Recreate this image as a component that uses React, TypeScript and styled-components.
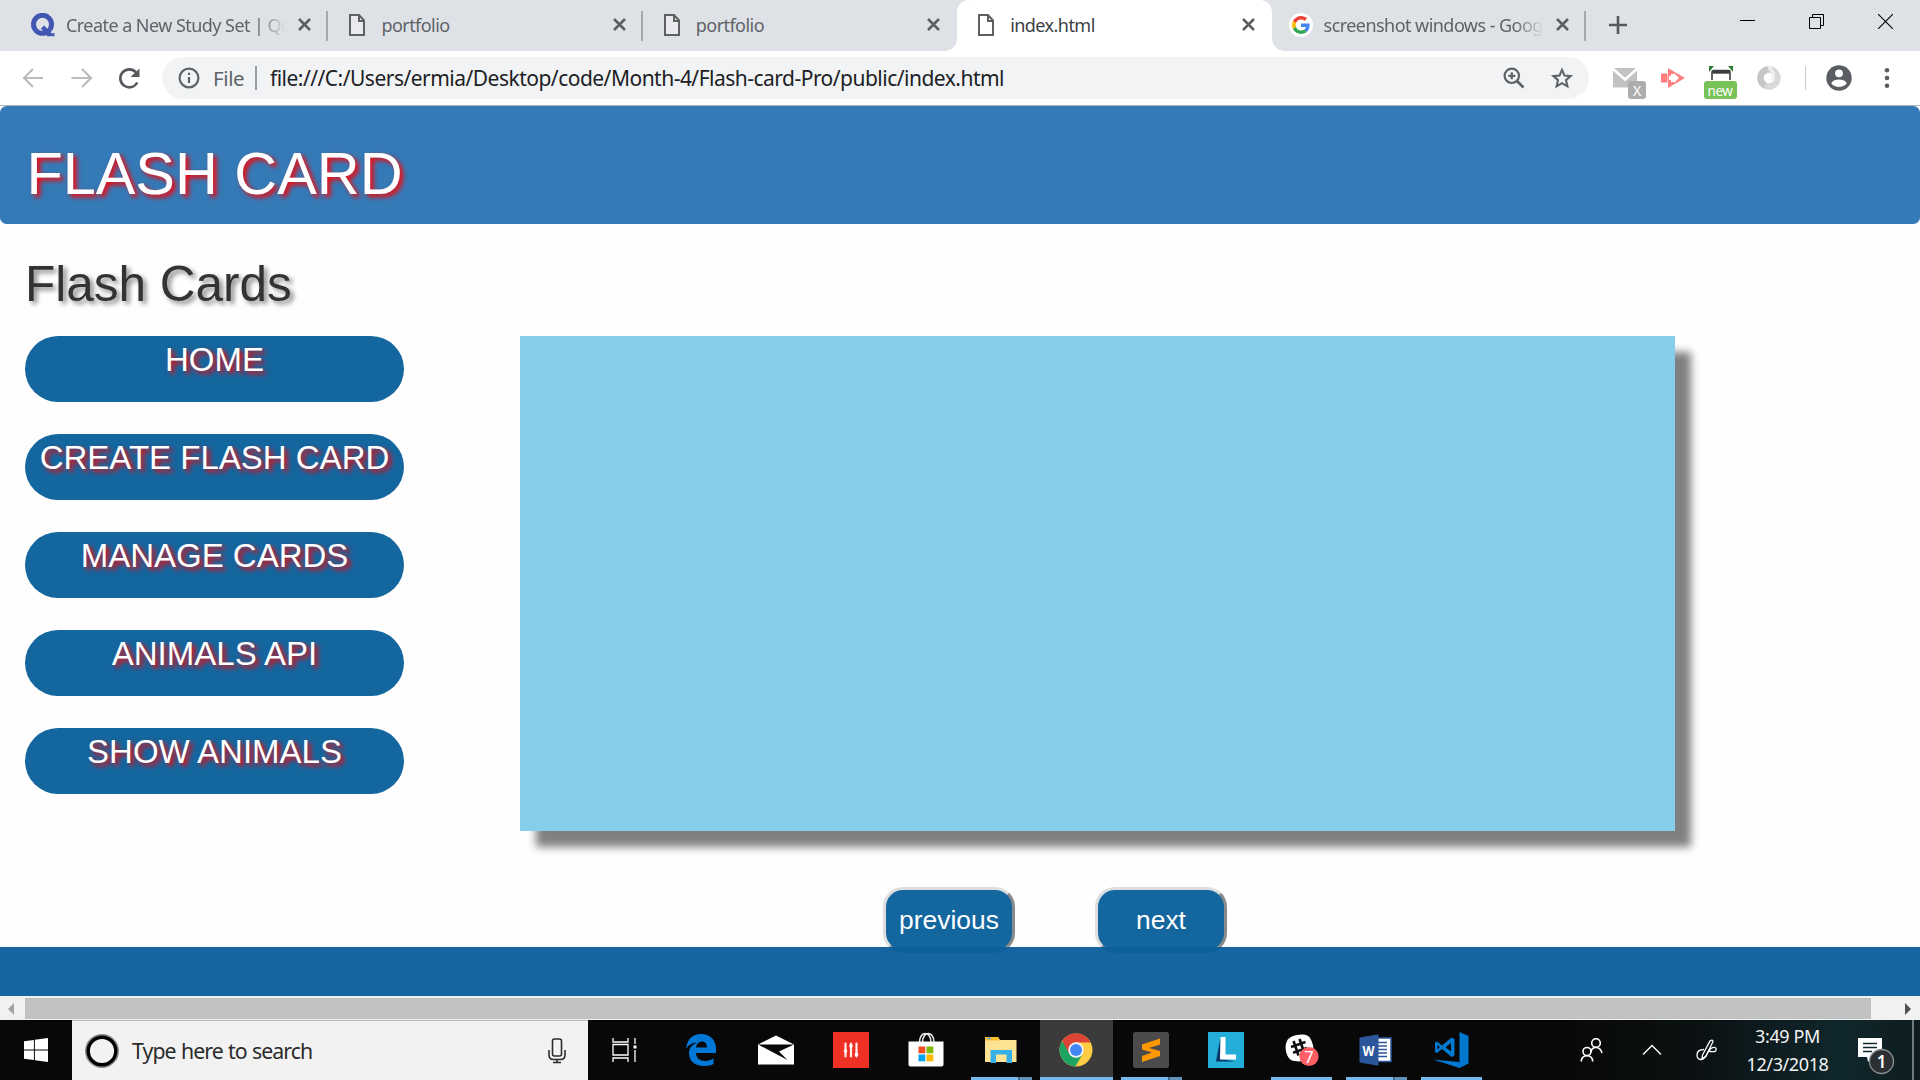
import React from "react";
import styled, { createGlobalStyle, css } from "styled-components";

const ui = `"Noto Sans", "Open Sans", sans-serif`;
const arial = `"Liberation Sans", Arial, sans-serif`;

const Global = createGlobalStyle`
  *, *::before, *::after { box-sizing: border-box; }
  body { margin: 0; background: #fff; overflow: hidden; }
  svg { display: block; flex: none; }
`;

const Screen = styled.div`
  width: 1920px;
  height: 1080px;
  display: flex;
  flex-direction: column;
  overflow: hidden;
  background: #fff;
`;

/* ---------- browser chrome ---------- */
const TabStrip = styled.div`
  display: flex;
  height: 51px;
  padding-left: 14px;
  background: #dee1e6;
`;

const Tab = styled.div<{ $active?: boolean; $divider?: boolean }>`
  display: flex;
  align-items: center;
  width: 314.4px;
  height: 51px;
  padding: 0 17px 2px;
  background: ${(p) => (p.$active ? "#fff" : "transparent")};
  border-radius: ${(p) => (p.$active ? "12px 12px 0 0" : "0")};
  color: ${(p) => (p.$active ? "#3c4043" : "#5f6368")};
  position: relative;
  ${(p) =>
    p.$divider &&
    css`
      &::after {
        content: "";
        position: absolute;
        right: 0;
        top: 11px;
        width: 2px;
        height: 30px;
        background: #a5a8ac;
      }
    `}
  ${(p) =>
    p.$active &&
    css`
      &::before,
      &::after {
        content: "";
        position: absolute;
        bottom: 0;
        width: 12px;
        height: 12px;
      }
      &::before {
        left: -12px;
        background: radial-gradient(circle at 0 0, transparent 11.5px, #fff 12px);
      }
      &::after {
        right: -12px;
        background: radial-gradient(circle at 100% 0, transparent 11.5px, #fff 12px);
      }
    `}
`;

const TabIcon = styled.span`
  display: flex;
  flex: none;
  width: 24px;
  height: 24px;
  justify-content: center;
  align-items: center;
  margin-right: 12px;
`;

const TabTitle = styled.span<{ $fade?: boolean }>`
  flex: 1;
  min-width: 0;
  font: 18px/24px ${ui};
  letter-spacing: -0.55px;
  white-space: nowrap;
  margin-right: 12px;
  ${(p) => p.$fade && css`
    margin-left: -1px;
    mask-image: linear-gradient(90deg, #000 calc(100% - 30px), transparent);
  `}
`;

const WindowControls = styled.div`
  display: flex;
  margin-left: auto;
  height: 43px;
  align-items: center;
`;

const ControlCell = styled.div`
  width: 69px;
  display: flex;
  justify-content: center;
`;

const NewTab = styled.div`
  width: 65px;
  display: flex;
  align-items: center;
  justify-content: center;
  padding-bottom: 2px;
`;

const Toolbar = styled.div`
  height: 55px;
  display: flex;
  align-items: center;
  border-bottom: 1px solid #b4b5b7;
  background: #fff;
`;

const NavButtons = styled.div`
  display: flex;
  width: 162px;
  padding-left: 21px;
  gap: 24px;
`;

const Omnibox = styled.div`
  display: flex;
  align-items: center;
  width: 1427px;
  height: 42px;
  border-radius: 21px;
  background: #f1f3f4;
  padding: 0 15px 0 16px;
`;

const Scheme = styled.span`
  font: 20.5px/28px ${ui};
  letter-spacing: -0.4px;
  color: #5f6368;
  width: 42px;
  margin-left: 13px;
`;

const SchemeRule = styled.span`
  width: 2px;
  height: 24px;
  background: #9a9da1;
  margin-right: 13px;
`;

const Url = styled.span`
  flex: 1;
  font: 21px/28px ${ui};
  letter-spacing: -0.515px;
  color: #202124;
  white-space: nowrap;
`;

const OmniActions = styled.div`
  display: flex;
  gap: 24px;
`;

const Extensions = styled.div`
  display: flex;
  align-items: center;
  flex: 1;
  height: 54px;
  padding-left: 24px;
`;

const ExtCell = styled.div<{ $w: number; $badged?: boolean }>`
  width: ${(p) => p.$w}px;
  padding-top: ${(p) => (p.$badged ? 10 : 0)}px;
  display: flex;
  align-items: center;
`;

const ExtRule = styled.span`
  width: 1px;
  height: 24px;
  background: #c8cacd;
  margin-right: 20px;
`;

/* ---------- page ---------- */
const Page = styled.main`
  height: 890px;
  display: flex;
  flex-direction: column;
  font-family: ${arial};
  background: #fefefe;
`;

const Jumbo = styled.header`
  height: 118px;
  padding: 34.65px 26.4px 0;
  border-radius: 6.6px;
  background: #337ab7;
`;

const Title = styled.h1`
  margin: 0;
  font: 400 59.4px/65.34px ${arial};
  color: #fff;
  text-shadow: 3.3px 3.3px 4.95px red;
`;

const Body = styled.div`
  display: grid;
  grid-template-columns: 379px 1155px;
  column-gap: 116px;
  grid-template-rows: 112px 495px;
  padding-left: 25px;
`;

const Heading = styled.h2`
  grid-column: 1 / -1;
  margin: 0;
  padding-top: 33px;
  font: 400 49.5px/54.45px ${arial};
  color: #333;
  text-shadow: 3.3px 3.3px 4.95px gray;
`;

const Menu = styled.nav`
  display: flex;
  flex-direction: column;
  gap: 32px;
`;

const MenuItem = styled.a`
  height: 66px;
  border-radius: 33px;
  background: #14669f;
  color: #fff;
  font-size: 33px;
  line-height: 47.1px;
  text-align: center;
  white-space: nowrap;
  text-shadow: 3.3px 3.3px 4.95px red;
`;

const Card = styled.section`
  background: #87ceeb;
  box-shadow: 16px 16px 8.25px gray;
`;

const Pager = styled.div`
  display: flex;
  gap: 80px;
  padding: 56px 0 0 883px;
`;

const PagerButton = styled.button`
  width: 132px;
  height: 66px;
  padding: 0;
  border: 3px solid;
  border-color: #dedede #8a8a8a #8a8a8a #dedede;
  border-radius: 20px;
  background: #14669f;
  color: #fff;
  font: 26.4px/37px ${arial};
`;

const Footer = styled.footer`
  height: 49px;
  margin-top: -6px;
  background: rgba(8, 94, 155, 0.95);
  position: relative;
`;

const ScrollBar = styled.div`
  height: 24px;
  display: flex;
  align-items: center;
  background: #f1f1f1;
  padding: 1px 8px 0 8px;
`;

const Thumb = styled.div`
  height: 21px;
  width: 1846px;
  margin: 0 34px 0 11px;
  background: #c1c1c1;
`;

const Arrow = styled.i<{ $right?: boolean }>`
  border: solid transparent;
  border-width: 6px 0;
  ${(p) => (p.$right ? "border-left: 6px solid #505050;" : "border-right: 6px solid #a3a3a3;")}
`;

/* ---------- taskbar ---------- */
const Taskbar = styled.div`
  height: 60px;
  display: flex;
  background: linear-gradient(90deg, #080808 0 1560px, #0b1112 1700px, #0f272c 1840px, #0f2226 1880px, #0d1b1f);
`;

const Start = styled.div`
  width: 72px;
  display: flex;
  align-items: center;
  justify-content: center;
`;

const Search = styled.div`
  width: 516px;
  display: flex;
  align-items: center;
  border-top: 1px solid #b9b9b9;
  background: #f2f2f2;
  padding: 0 21px 0 12px;
`;

const SearchText = styled.span`
  flex: 1;
  margin-left: 12px;
  font: 21.3px/30px ${ui};
  letter-spacing: -0.92px;
  word-spacing: 0.6px;
  color: #2b2b2b;
  padding-top: 1px;
`;

const TaskView = styled.div`
  width: 76px;
  display: flex;
  align-items: center;
  justify-content: center;
  padding-right: 3px;
`;

const TaskApp = styled.div<{ $active?: boolean; $open?: "one" | "many" }>`
  width: 75px;
  height: 60px;
  padding: 0 1px;
  display: grid;
  grid-template-rows: 57px 3px;
  justify-items: center;
  align-items: center;
  &::before {
    content: "";
    grid-area: 1 / 1 / 3 / 2;
    width: 73px;
    height: 60px;
    background: ${(p) => (p.$active ? "#3b3b3b" : "transparent")};
  }
  &::after {
    content: "";
    grid-area: 2 / 1 / 3 / 2;
    height: 3px;
    width: ${(p) => (p.$active ? 73 : 61)}px;
    background: ${(p) =>
      p.$open === "one"
        ? "#76b9ed"
        : p.$open === "many"
          ? "linear-gradient(90deg, #76b9ed 0 47px, #42698a 47px 49px, #6094bd 49px)"
          : "transparent"};
  }
`;

const AppIcon = styled.span`
  grid-area: 1 / 1 / 3 / 2;
  margin-right: 1px;
  z-index: 1;
`;

const Tray = styled.div`
  display: flex;
  margin-left: auto;
  align-items: center;
`;

const TrayCell = styled.div<{ $w: number; $low?: boolean }>`
  width: ${(p) => p.$w}px;
  padding: ${(p) => (p.$low ? "12px 4px 0 0" : "0")};
  display: flex;
  justify-content: center;
`;

const Clock = styled.div`
  width: 112px;
  padding-left: 1px;
  text-align: center;
  font: 18px/28px ${ui};
  letter-spacing: -0.4px;
  color: #f4f4f4;
`;

const DesktopEdge = styled.div`
  width: 8px;
  height: 60px;
  border-left: 2px solid #6e7b7e;
`;

const FileIcon = () => (
  <svg width="16" height="22" viewBox="0 0 16 22" fill="#fff" fillOpacity="0.35" stroke="#5f6060" strokeWidth="2">
    <path d="M1 1H10L15 6.5V21H1Z" />
    <path d="M10 1V7H15" fill="none" />
  </svg>
);

const Close = () => (
  <svg width="13" height="13" viewBox="0 0 13 13" stroke="#5a5d61" strokeWidth="2.5">
    <path d="M1 1L12 12M12 1L1 12" />
  </svg>
);

const QuizletIcon = () => (
  <svg width="25" height="24" viewBox="1 0 25 24" fill="none" stroke="#4257b2" strokeWidth="5">
    <circle cx="12.5" cy="11.3" r="9" />
    <path d="M12.5 14L20 22" strokeWidth="4.5" />
    <path d="M17 21.7H24.5" strokeWidth="3" />
  </svg>
);

const GoogleIcon = () => (
  <svg width="24" height="24" viewBox="0 0 24 24">
    <circle cx="12" cy="12" r="12" fill="#fff" />
    <g transform="translate(3 3) scale(.375)">
      <path fill="#EA4335" d="M24 9.5c3.54 0 6.71 1.22 9.21 3.6l6.85-6.85C35.9 2.38 30.47 0 24 0 14.62 0 6.51 5.38 2.56 13.22l7.98 6.19C12.43 13.72 17.74 9.5 24 9.5z" />
      <path fill="#4285F4" d="M46.98 24.55c0-1.57-.15-3.09-.38-4.55H24v9.02h12.94c-.58 2.96-2.26 5.48-4.78 7.18l7.73 6c4.51-4.18 7.09-10.36 7.09-17.65z" />
      <path fill="#FBBC05" d="M10.53 28.59c-.48-1.45-.76-2.99-.76-4.59s.27-3.14.76-4.59l-7.98-6.19C.92 16.46 0 20.12 0 24c0 3.88.92 7.54 2.56 10.78l7.97-6.19z" />
      <path fill="#34A853" d="M24 48c6.48 0 11.93-2.13 15.89-5.81l-7.73-6c-2.15 1.45-4.92 2.3-8.16 2.3-6.26 0-11.57-4.22-13.47-9.91l-7.98 6.19C6.51 42.62 14.62 48 24 48z" />
    </g>
  </svg>
);

const BackArrow = ({ flip }: { flip?: boolean }) => (
  <svg width="24" height="24" viewBox="0 0 24 24" fill="none" stroke="#babcbe" strokeWidth="2.2">
    <path d={flip ? "M2.500 12H21M13 3L22 12L13 21" : "M22 12H3.500M12 3L3 12L12 21"} />
  </svg>
);

const Reload = () => (
  <svg width="24" height="24" viewBox="0 0 24 24">
    <path d="M20.300 16.500A9 9 0 1 1 19 6.300" fill="none" stroke="#55585d" strokeWidth="2.6" />
    <path d="M22.500 2.500V11H13.500Z" fill="#55585d" />
  </svg>
);

const Info = () => (
  <svg width="22" height="22" viewBox="0 0 22 22" fill="none" stroke="#5f6368" strokeWidth="2.2">
    <circle cx="11" cy="11" r="9.4" />
    <path d="M11 10V16M11 5.7V8" />
  </svg>
);

const ZoomIn = () => (
  <svg width="24" height="24" viewBox="0 0 24 24" fill="none" stroke="#5f6368" strokeWidth="2.2">
    <circle cx="9.8" cy="9.8" r="7.2" />
    <path d="M15 15L21.5 21.5" strokeWidth="2.6" />
    <path d="M9.8 6.3V13.3M6.3 9.8H13.3" />
  </svg>
);

const Star = () => (
  <svg width="24" height="24" viewBox="0 0 24 24" fill="none" stroke="#5f6368" strokeWidth="2.1">
    <path d="M12 3.8L14.500 9.600L20.600 10.100L16 14.200L17.400 20.300L12 17.100L6.600 20.300L8 14.200L3.400 10.100L9.500 9.600Z" />
  </svg>
);

const MailExt = () => (
  <svg width="34" height="34" viewBox="0 0 34 34">
    <path d="M0 2H24V21.500H0Z" fill="#c2c2c2" />
    <path d="M-.5 2.500L12 13.500L24.500 2.500" fill="none" stroke="#fff" strokeWidth="2.800" />
    <path d="M3 2H21L12 9.700Z" fill="#c2c2c2" />
    <rect x="15" y="15" width="18" height="18" rx="3" fill="#adadad" />
    <text x="24" y="30" textAnchor="middle" fontSize="14" fontFamily="Noto Sans" fill="#fff">X</text>
  </svg>
);

const CastExt = () => (
  <svg width="24" height="20" viewBox="0 0 24 20">
    <path d="M0 5.500H6.500V14.500H0Z M7 0L24 10L7 20Z" fill="#ff7f7f" />
    <path d="M10 6H13V5L18 10L13 15V14H10V12H8V8H10Z" fill="#fff" />
  </svg>
);

const NewExt = () => (
  <svg width="34" height="34" viewBox="0 0 34 34">
    <path d="M5 0H10L5 6ZM29 0H24L29 6Z" fill="#2f7d32" />
    <path d="M8 14V6Q8 4.500 9.500 4.500H24.500Q26 4.500 26 6V14" fill="none" stroke="#3b3f42" strokeWidth="1.6" />
    <path d="M8.500 6H25.500" stroke="#3b3f42" strokeWidth="3.400" />
    <rect x="0" y="15" width="33" height="18" rx="3" fill="#78c257" />
    <text x="16" y="29.500" textAnchor="middle" fontSize="13.500" fontFamily="Noto Sans" fill="#fff" letterSpacing="-.4">new</text>
  </svg>
);

const RingExt = () => (
  <svg width="24" height="24" viewBox="0 0 24 24" fill="none" strokeWidth="6.500">
    <circle cx="12" cy="12" r="8.500" stroke="#d8d8d8" />
    <path d="M12 3.500A8.500 8.500 0 0 0 8 19.500" stroke="#c6c6c6" />
    <path d="M11 1.500A8 9 0 0 1 15.500 15" stroke="#eee" strokeWidth="3" />
  </svg>
);

const Avatar = () => (
  <svg width="26" height="26" viewBox="0 0 26 26">
    <circle cx="13" cy="13" r="12.700" fill="#5a5d62" />
    <circle cx="13" cy="8.300" r="3.900" fill="#fff" />
    <path d="M5.200 18.200C6.500 15.600 10 14.600 13 14.600S19.500 15.600 20.800 18.200C19 20.800 16 22 13 22S7 20.800 5.200 18.200Z" fill="#fff" />
  </svg>
);

const Dots = () => (
  <svg width="6" height="22" viewBox="0 0 6 22" fill="#5a5d62">
    <circle cx="3" cy="3.300" r="2.300" /><circle cx="3" cy="11" r="2.300" /><circle cx="3" cy="18.700" r="2.300" />
  </svg>
);

const icons: Record<string, React.ReactNode> = {
  edge: (
    <svg width="32" height="34" viewBox="0 0 32 34">
      <path d="M1 16C2 6 8 1 16 1C26 1 31 8 31 16V20H11C11 25 15 28 20 28C23 28 26 27 28.500 25.500V31C26 32.500 22 33 19 33C10 33 4 28 4 20C4 15 7 12 12 9.500C6 10 3 12.500 1 16ZM11 14.500H22C22 11 20 8.500 17 8.500S11.500 11 11 14.500Z" fill="#0078d7" />
    </svg>
  ),
  mail: (
    <svg width="36" height="30" viewBox="0 0 36 30">
      <path d="M0 9.500L18 .5L36 9.500V29.500H0Z" fill="#fff" />
      <path d="M0 9.500H36L21 16.500L29.500 25Z" fill="#080808" />
    </svg>
  ),
  mixer: (
    <svg width="36" height="36" viewBox="0 0 36 36">
      <path d="M0 0H36V36H0Z" fill="#ee3124" />
      <path d="M12.500 11.500V24.500M18 11.500V24.500M23.500 11.500V24.500" stroke="#fff" strokeOpacity=".9" strokeWidth="2.200" strokeLinecap="round" />
      <g fill="#fff"><circle cx="12.500" cy="19" r="1.800" /><circle cx="18" cy="14" r="1.800" /><circle cx="23.500" cy="22.500" r="1.800" /></g>
    </svg>
  ),
  store: (
    <svg width="36" height="36" viewBox="0 0 36 36">
      <path d="M11.500 10C12-1.500 22.500-1.500 23 10M14.500 10C15-1.500 25.500-1.500 26 10" fill="none" stroke="#e8e8e8" strokeWidth="1.500" />
      <path d="M.5 9.500H35.500V32.500Q35.500 34.500 33.500 34.500H2.500Q.5 34.500 .5 32.500Z" fill="#fff" />
      <path d="M10.500 14.500H17.300V21.300H10.500Z" fill="#f04e1f" /><path d="M18.500 14.500H25.300V21.300H18.500Z" fill="#7fba00" />
      <path d="M10.500 22.500H17.300V29.300H10.500Z" fill="#00a4ef" /><path d="M18.500 22.500H25.300V29.300H18.500Z" fill="#ffb900" />
    </svg>
  ),
  explorer: (
    <svg width="34" height="28" viewBox="0 0 34 28">
      <path d="M1 1H14L16 4H32.500V26H1Z" fill="#ffe395" />
      <path d="M1 1H14L15.500 4.500H1Z" fill="#fbbf2b" />
      <path d="M3 2.500H7" stroke="#4fa8e0" strokeWidth="1.300" />
      <path d="M6.500 27V14H28V27H22.500V18.500H12V27Z" fill="#36b0e6" />
    </svg>
  ),
  chrome: (
    <svg width="34" height="34" viewBox="0 0 34 34">
      <circle cx="17" cy="17" r="16.500" fill="#fc4" />
      <path d="M17 17L2.700 8.750A16.500 16.500 0 0 0 16.500 33.500L23.500 21Z" fill="#1da362" />
      <path d="M17 9.500H31.700A16.500 16.500 0 0 0 3.200 7.950L10.500 20.750Z" fill="#db4437" />
      <circle cx="17" cy="17" r="7.700" fill="#f4f4f4" /><circle cx="17" cy="17" r="6" fill="#4285f4" />
    </svg>
  ),
  sublime: (
    <svg width="36" height="36" viewBox="0 0 36 36">
      <rect width="36" height="36" rx="2.500" fill="#4b4b4b" />
      <path d="M9 12.500L27 6.500V12.500L16 16L27 19V24L9 30V24L19 20.500L9 17.500Z" fill="#ff9800" />
    </svg>
  ),
  lync: (
    <svg width="36" height="36" viewBox="0 0 36 36">
      <path d="M0 0H36V36H0Z" fill="#25add9" />
      <path d="M12.500 5L8 29.500H27L13 27Z" fill="#053568" />
      <path d="M12.500 5H17.500V22.500H28V27.500H12Z" fill="#fff" />
    </svg>
  ),
  slack: (
    <svg width="36" height="36" viewBox="0 0 36 36">
      <path d="M4 9C6 4 19 .5 25 4C29 6 33 20 29 24.500C26 29 15 31 8 28C4 26 .5 15 4 9Z" fill="#fff" />
      <path d="M10.500 9L15.500 23.500M16.500 7L21.500 21.500M8 15L22.500 10M10 20.800L24 16" stroke="#111" strokeWidth="2.600" />
      <circle cx="26" cy="24.500" r="9.600" fill="#ff5f64" />
      <text x="26" y="30.500" textAnchor="middle" fontSize="16.500" fontFamily="Noto Sans" fill="#fff">7</text>
    </svg>
  ),
  word: (
    <svg width="34" height="32" viewBox="0 0 34 32">
      <path d="M17 4H32V27.500H17Z" fill="#fff" stroke="#2b579a" strokeWidth="1.500" />
      <path d="M18 8.500H28M18 12H28M18 15.500H28M18 19H28M18 22.500H28" stroke="#2b579a" strokeWidth="1.700" />
      <path d="M.5 3.500L19.500 .3V31.700L.5 28.500Z" fill="#2b579a" />
      <text x="9.500" y="21.500" textAnchor="middle" fontSize="14" fontWeight="700" fontFamily="Noto Sans" fill="#fff" textLength="12" lengthAdjust="spacingAndGlyphs">W</text>
    </svg>
  ),
  code: (
    <svg width="36" height="36" viewBox="0 0 36 36" fill="#0078cf">
      <path d="M26.500 0L35.500 4V31.500L26.500 36L0 27.500L26.500 30Z" />
      <path d="M18.500 5.500L21.500 7V23.500L18.500 25L9 17L4 21L2 20V10.500L4 9.500L9 13.500ZM18 11L12.500 15.300L18 19.500ZM4.500 13V17.500L6.800 15.300Z" fillRule="evenodd" />
    </svg>
  ),
};

const apps: { id: string; active?: boolean; open?: "one" | "many" }[] = [
  { id: "edge" },
  { id: "mail" },
  { id: "mixer" },
  { id: "store" },
  { id: "explorer", open: "many" },
  { id: "chrome", open: "one", active: true },
  { id: "sublime", open: "many" },
  { id: "lync" },
  { id: "slack", open: "one" },
  { id: "word", open: "many" },
  { id: "code", open: "one" },
];

const menu = ["HOME", "CREATE FLASH CARD", "MANAGE CARDS", "ANIMALS API", "SHOW ANIMALS"];

export default function App() {
  return (
    <Screen>
      <Global />
      <TabStrip>
        <Tab $divider>
          <TabIcon><QuizletIcon /></TabIcon>
          <TabTitle $fade>Create a New Study Set | Qu</TabTitle>
          <Close />
        </Tab>
        <Tab $divider>
          <TabIcon><FileIcon /></TabIcon>
          <TabTitle>portfolio</TabTitle>
          <Close />
        </Tab>
        <Tab>
          <TabIcon><FileIcon /></TabIcon>
          <TabTitle>portfolio</TabTitle>
          <Close />
        </Tab>
        <Tab $active>
          <TabIcon><FileIcon /></TabIcon>
          <TabTitle>index.html</TabTitle>
          <Close />
        </Tab>
        <Tab $divider>
          <TabIcon><GoogleIcon /></TabIcon>
          <TabTitle $fade>screenshot windows - Goog</TabTitle>
          <Close />
        </Tab>
        <NewTab>
          <svg width="18" height="18" viewBox="0 0 18 18" stroke="#55585d" strokeWidth="2.6">
            <path d="M9 0V18M0 9H18" />
          </svg>
        </NewTab>
        <WindowControls>
          <ControlCell>
            <svg width="15" height="15" viewBox="0 0 15 15" stroke="#000"><path d="M0 6.500H15" /></svg>
          </ControlCell>
          <ControlCell>
            <svg width="15" height="15" viewBox="0 0 15 15" fill="none" stroke="#000">
              <path d="M.5 3.500H11.500V14.500H.5ZM3.500 3V.5H14.500V11.500H12" />
            </svg>
          </ControlCell>
          <ControlCell>
            <svg width="15" height="15" viewBox="0 0 15 15" stroke="#000" strokeWidth="1.100"><path d="M0 0L15 15M15 0L0 15" /></svg>
          </ControlCell>
        </WindowControls>
      </TabStrip>

      <Toolbar>
        <NavButtons>
          <BackArrow />
          <BackArrow flip />
          <Reload />
        </NavButtons>
        <Omnibox>
          <Info />
          <Scheme>File</Scheme>
          <SchemeRule />
          <Url>file:///C:/Users/ermia/Desktop/code/Month-4/Flash-card-Pro/public/index.html</Url>
          <OmniActions><ZoomIn /><Star /></OmniActions>
        </Omnibox>
        <Extensions>
          <ExtCell $w={48} $badged><MailExt /></ExtCell>
          <ExtCell $w={43}><CastExt /></ExtCell>
          <ExtCell $w={53} $badged><NewExt /></ExtCell>
          <ExtCell $w={48}><RingExt /></ExtCell>
          <ExtRule />
          <ExtCell $w={58}><Avatar /></ExtCell>
          <Dots />
        </Extensions>
      </Toolbar>

      <Page>
        <Jumbo><Title>FLASH CARD</Title></Jumbo>
        <Body>
          <Heading>Flash Cards</Heading>
          <Menu>{menu.map((m) => <MenuItem key={m}>{m}</MenuItem>)}</Menu>
          <Card />
        </Body>
        <Pager>
          <PagerButton>previous</PagerButton>
          <PagerButton>next</PagerButton>
        </Pager>
        <Footer />
      </Page>

      <ScrollBar>
        <Arrow />
        <Thumb />
        <Arrow $right />
      </ScrollBar>

      <Taskbar>
        <Start>
          <svg width="24" height="24" viewBox="0 0 24 24" fill="#fff">
            <path d="M0 3.300L9.900 2V11.500H0ZM10.900 1.800L24 0V11.500H10.900ZM0 12.500H9.900V22L0 20.700ZM10.900 12.500H24V24L10.900 22.200Z" />
          </svg>
        </Start>
        <Search>
          <svg width="36" height="36" viewBox="0 0 36 36" fill="none">
            <circle cx="18" cy="18" r="15.500" stroke="#8a8a8a" strokeWidth="3" />
            <circle cx="18" cy="18" r="13.800" stroke="#000" strokeWidth="3.400" />
          </svg>
          <SearchText>Type here to search</SearchText>
          <svg width="20" height="26" viewBox="0 0 20 26" fill="none" stroke="#2b2b2b" strokeWidth="1.600">
            <rect x="5.500" y="1" width="9" height="17" rx="2" />
            <path d="M2 12V17Q2 21.500 6.500 21.500H13.500Q18 21.500 18 17V12M10 21.500V24.500M6 24.500H14" />
          </svg>
        </Search>
        <TaskView>
          <svg width="26" height="24" viewBox="0 0 26 24" fill="none" stroke="#fff" strokeWidth="1.300">
            <path d="M1 0V4H16V0M1 6.500H16V17H1ZM1 24V20H16V24M23 0V6M23 12V24" />
            <path d="M21.500 7.500H24.500V10.500H21.500Z" fill="#fff" stroke="none" />
          </svg>
        </TaskView>
        {apps.map((a) => (
          <TaskApp key={a.id} $active={a.active} $open={a.open}>
            <AppIcon>{icons[a.id]}</AppIcon>
          </TaskApp>
        ))}
        <Tray>
          <TrayCell $w={60}>
            <svg width="24" height="24" viewBox="0 0 24 24" fill="none" stroke="#fff" strokeWidth="1.600">
              <circle cx="16" cy="5" r="4.300" /><path d="M11 14Q11.500 9.500 16 9.500T22 15" />
              <circle cx="7" cy="13.500" r="4" /><path d="M1.300 23.500Q1.500 17.700 7 17.700T12.700 23.500" />
            </svg>
          </TrayCell>
          <TrayCell $w={60}>
            <svg width="20" height="12" viewBox="0 0 20 12" fill="none" stroke="#fff" strokeWidth="1.400"><path d="M1 10.500L10 1.500L19 10.500" /></svg>
          </TrayCell>
          <TrayCell $w={49}>
            <svg width="22" height="22" viewBox="0 0 22 22" fill="none" stroke="#fff" strokeWidth="1.300">
              <path d="M6.500 16L14 2Q16.500 0 17 2.500L10 17L6 20Z" />
              <path d="M8 10.500Q1 10.500 1 16Q1 20.500 5 20.500Q9 20.500 12 13Q15 8 19 8.500Q21.500 10 19 12.500Q16 13 12 12" />
            </svg>
          </TrayCell>
          <Clock>3:49 PM<br />12/3/2018</Clock>
          <TrayCell $w={69} $low>
            <svg width="38" height="38" viewBox="0 0 38 38">
              <path d="M1 1H25V20H15L11 25L10 20H1Z" fill="#fff" />
              <path d="M6 6.500H20M6 10.500H20M6 14.500H15" stroke="#10282d" strokeWidth="1.300" />
              <circle cx="24.500" cy="24.500" r="12" fill="#2b2f31" stroke="#8b9092" strokeWidth="1.300" />
              <text x="24.500" y="31" textAnchor="middle" fontSize="17" fontWeight="600" fontFamily="Noto Sans" fill="#fff">1</text>
            </svg>
          </TrayCell>
          <DesktopEdge />
        </Tray>
      </Taskbar>
    </Screen>
  );
}
